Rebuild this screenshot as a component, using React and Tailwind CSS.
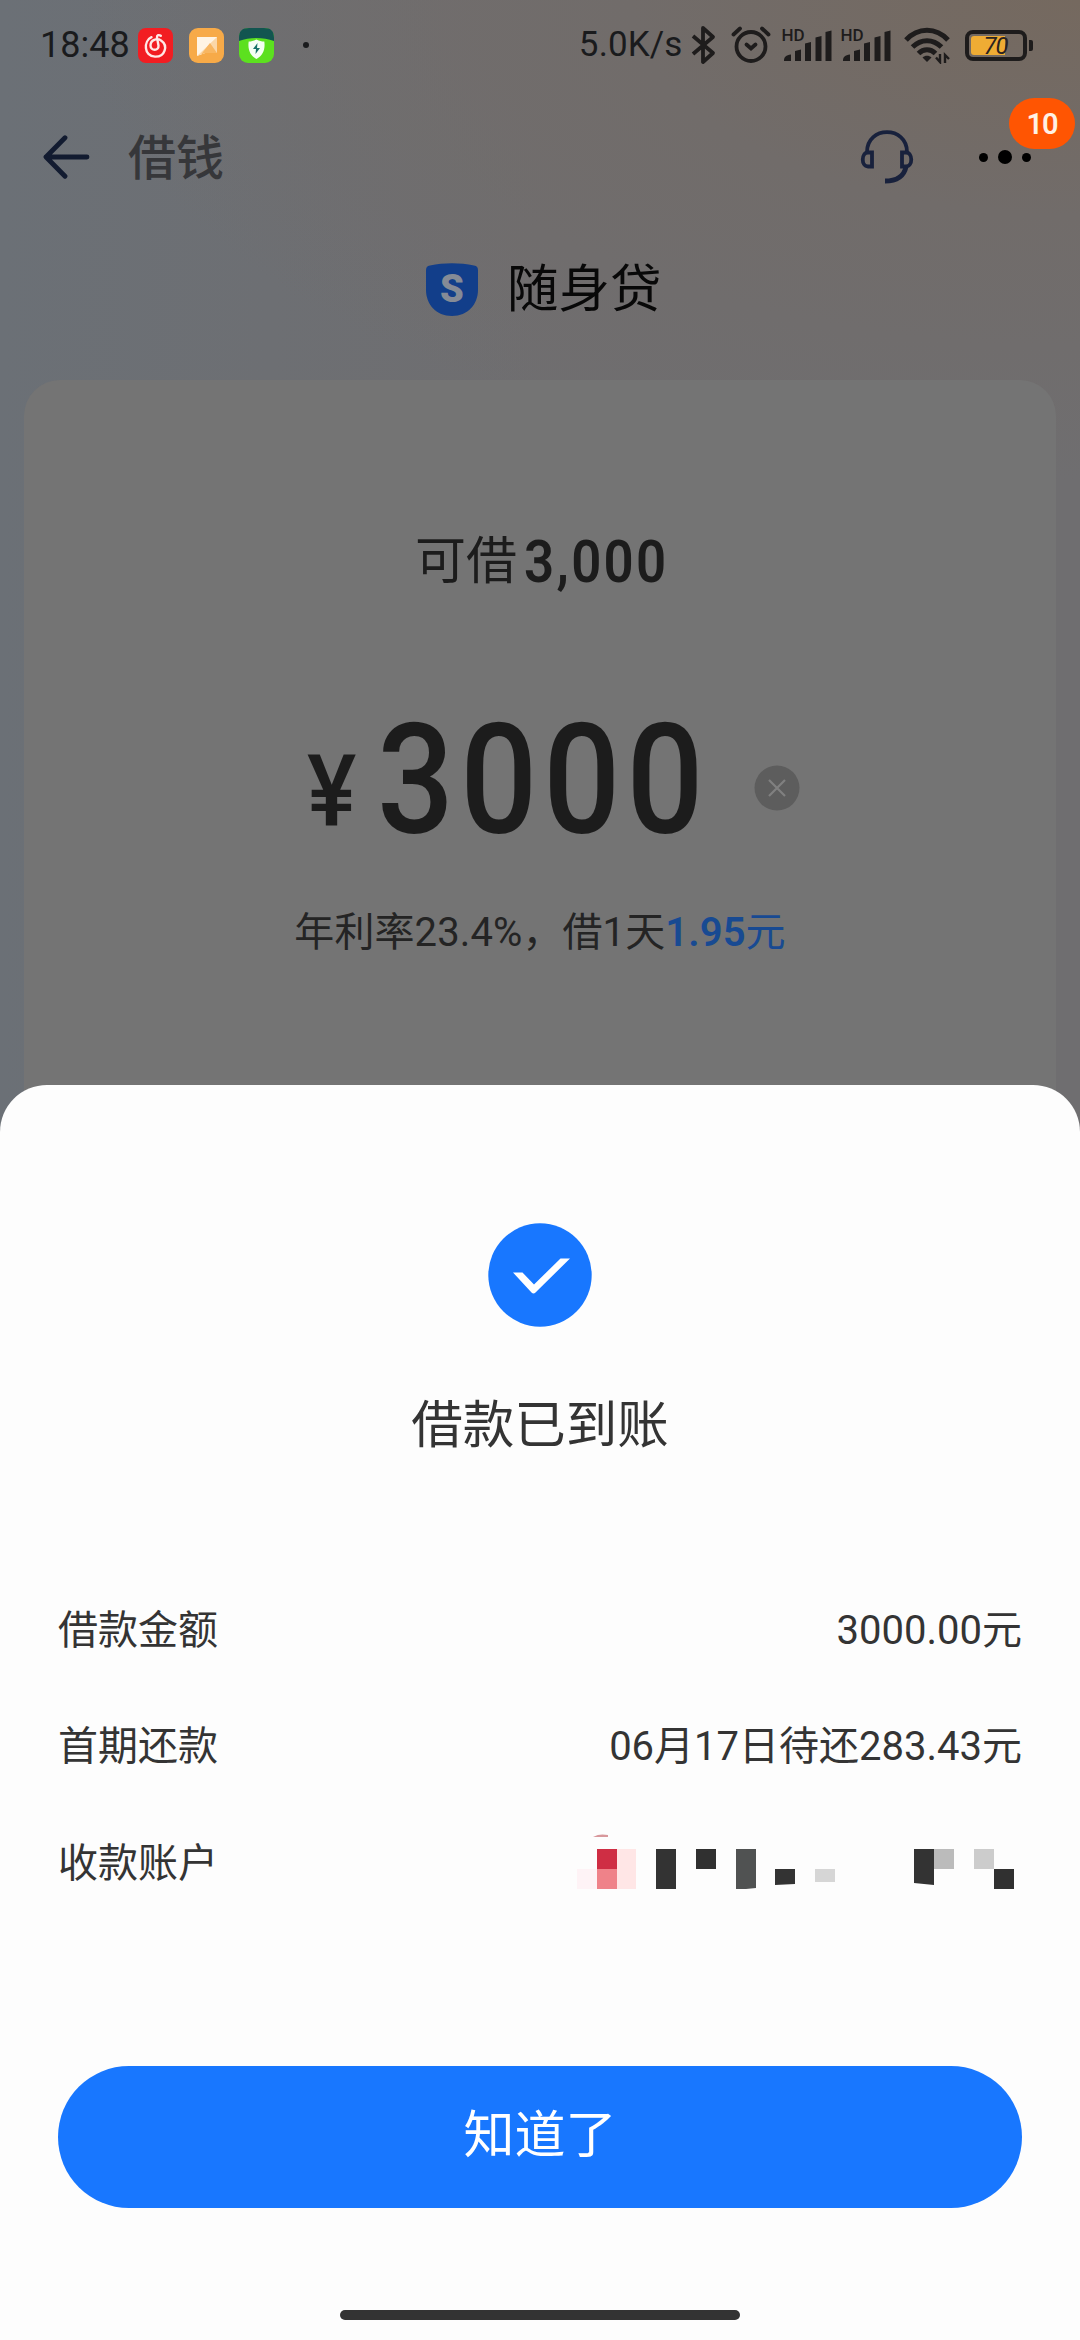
import React from "react";

const DETAILS = [
  { label: "借款金额", value: "3000.00元" },
  { label: "首期还款", value: "06月17日待还283.43元" },
  { label: "收款账户", masked: true },
];

// Blocks that hide the bank account: x, y, width, height, color
const MASK_BLOCKS = [
  [0, 35, 20, 20, "#fef3f6"],
  [20, 15, 20, 20, "#cf2e44"],
  [20, 35, 20, 20, "#ef8289"],
  [40, 15, 19, 40, "#ffe6e6"],
  [79, 15, 20, 40, "#333333"],
  [119, 15, 20, 20, "#303030"],
  [238, 35, 20, 13, "#d6d6d6"],
  [357, 15, 20, 20, "#bbbbbb"],
  [397, 15, 20, 20, "#cccccc"],
  [417, 35, 20, 20, "#303030"],
];

const MusicIcon = () => (
  <svg width="35" height="35" viewBox="0 0 35 35" fill="none">
    <rect width="35" height="35" rx="8" fill="#f21d22" />
    <g stroke="#ffe9e6" strokeWidth="2.4" strokeLinecap="round">
      <path d="M13.500 9.200C5.500 13 5.500 28 17 28.600c10 .4 13.500-11.200 6-16.200-4-2.700-10.500-.6-10.500 5 0 5.800 8.500 5.800 8 .2L19 9.500c-.2-2.500 2-3 3.800-1.700" />
    </g>
  </svg>
);

const NoteIcon = () => (
  <svg width="35" height="35" viewBox="0 0 35 35">
    <rect width="35" height="35" rx="9" fill="#f7aa48" />
    <path d="M8 9h20v16H16l-8 3z" fill="#fff4e4" />
    <path d="M28 9v16H16l-8 3z" fill="#fbd7a8" />
    <path d="M28 25H16l-4 1.500L21 15z" fill="#f8b661" />
  </svg>
);

const ShieldAppIcon = () => (
  <svg width="35" height="35" viewBox="0 0 35 35">
    <rect width="35" height="35" rx="9" fill="#5ce01f" />
    <path d="M0 10C0 3 3 0 10 0h15c7 0 10 3 10 10v3c-11-4-24-4-35 0z" fill="#125550" />
    <path d="M17.500 11.500c3 1.500 5 2 7.800 2 1.200 8-1.500 14.500-7.800 17.500-6.300-3-9-9.500-7.800-17.500 2.800 0 4.800-.5 7.800-2z" fill="#f4fff4" />
    <path d="M18.500 15l-4.500 6h3l-.5 5 4.500-6h-3z" fill="#167269" />
  </svg>
);

const BluetoothIcon = () => (
  <svg width="26" height="40" viewBox="0 0 26 40" fill="none" stroke="#1e1c1c" strokeWidth="3.800" strokeLinejoin="round">
    <path d="M2 11l20 17-10 9V3l10 9L2 29" />
  </svg>
);

const AlarmIcon = () => (
  <svg width="40" height="38" viewBox="0 0 40 38" fill="none" stroke="#1e1c1c" strokeWidth="3.800" strokeLinecap="round">
    <circle cx="20" cy="20.500" r="14.500" />
    <path d="M2.500 8.500l6.500-6M37.500 8.500l-6.500-6" />
    <path d="M15.500 18.500l4.500 4 4.500-4" />
  </svg>
);

const SignalIcon = () => (
  <div className="relative h-[33px] w-[50px]">
    <span className="absolute top-0 left-0 text-[17px] leading-[13px] font-medium text-[#1e1c1c]">
      HD
    </span>
    <svg className="absolute inset-0" width="50" height="33" viewBox="0 0 50 33" fill="#1e1c1c">
      <path d="M2 32c0-4 2-6 7-6.500V32zM13 22l6-1.500V32h-6zM23 14.500l6-1.500v19h-6zM33.500 8.500l6-1.500v25h-6zM43.500 3l6-1.500V32h-6z" />
    </svg>
  </div>
);

const WifiIcon = () => (
  <svg width="46" height="38" viewBox="0 0 46 38" fill="none" stroke="#1e1c1c" strokeWidth="5">
    <path d="M2 14C14 1 32 1 44 14" />
    <path d="M8.500 21c8.500-8.500 20.500-8.500 29 0" />
    <path d="M14.500 27.500c5-5 12-5 17 0" />
    <path d="M18.500 31.500c2.500-2.500 6.500-2.500 9 0L23 36z" fill="#1e1c1c" stroke="none" />
    <path d="M36 28v8l-4-4.500M41 37v-8l4 4" strokeWidth="2.400" />
  </svg>
);

const BatteryIcon = () => (
  <div className="flex items-center gap-[2px]">
    <div className="relative h-[31px] w-[62px] rounded-[8px] border-4 border-[#1e1c1c]">
      <div className="absolute top-[2px] bottom-[2px] left-[2px] w-[34px] rounded-l-[3px] bg-[#efac34]" />
      <span className="absolute inset-0 text-center text-[24px] leading-[25px] tracking-[-1px] text-[#2a2320] italic">
        70
      </span>
    </div>
    <div className="h-[11px] w-[4px] rounded-r-[2px] bg-[#1e1c1c]" />
  </div>
);

const StatusBar = () => (
  <div className="flex h-[90px] items-center text-[#1a1b1d]">
    <span className="ml-[40px] w-[98px] text-[36px]">18:48</span>
    <div className="flex items-center gap-[15.500px]">
      <MusicIcon />
      <NoteIcon />
      <ShieldAppIcon />
    </div>
    <div className="ml-[29px] h-[6px] w-[6px] rounded-full bg-[#1a1b1d]" />
    <span className="ml-auto text-[35px] tracking-[0.1px]">5.0K/s</span>
    <div className="ml-[8px] flex items-center">
      <BluetoothIcon />
      <div className="ml-[14px]"><AlarmIcon /></div>
      <div className="ml-[11px]"><SignalIcon /></div>
      <div className="ml-[9px]"><SignalIcon /></div>
      <div className="ml-[13px]"><WifiIcon /></div>
      <div className="mr-[47.500px] ml-[15px]"><BatteryIcon /></div>
    </div>
  </div>
);

const NavBar = () => (
  <div className="flex h-[134px] items-center">
    <svg className="ml-[43px]" width="47" height="44" viewBox="0 0 47 44" fill="none" stroke="#121b30" strokeWidth="4.800" strokeLinecap="round" strokeLinejoin="round">
      <path d="M44 22H3M22 2.800L3 22l19 19.200" />
    </svg>
    <h1 className="ml-[38px] pt-[4px] text-[48px] font-medium text-[#36373a]">借钱</h1>
    <svg className="ml-auto" width="54" height="56" viewBox="0 0 54 56" fill="none" stroke="#18213c" strokeWidth="3.800">
      <path d="M7 23C7-3.500 47-3.500 47 23" />
      <path d="M12 23.500H8c-7 0-7 14 0 14h4zM42 23.500h4c7 0 7 14 0 14h-4z" />
      <path d="M46 38c-2 9-9 14-21 14" strokeWidth="4.800" />
    </svg>
    <div className="relative mr-[49px] ml-[65px] flex h-[54px] w-[52px] items-center justify-between">
      <i className="h-[9px] w-[9px] rounded-full bg-black" />
      <i className="h-[14px] w-[14px] rounded-full bg-black" />
      <i className="h-[9px] w-[9px] rounded-full bg-black" />
      <span className="absolute top-[-32px] left-[30px] h-[51px] w-[66px] rounded-full bg-[#ff5502] text-center text-[29px] leading-[53px] font-semibold tracking-[-1px] text-[#fff1e4]">
        10
      </span>
    </div>
  </div>
);

const Brand = () => (
  <div className="flex h-[156px] items-center pb-[25px] pl-[425px]">
    <div className="relative h-[54px] w-[54px]">
      <svg width="54" height="54" viewBox="0 0 54 54">
        <path d="M5 2.500c14-3 30-3 44 0 3 .5 4 2 4 5V27c0 14-10 26-26 26S1 41 1 27V7.500c0-3 1-4.500 4-5z" fill="#123e8a" />
      </svg>
      <span className="absolute inset-0 text-center text-[38px] leading-[53px] font-black text-[#858b96]">
        S
      </span>
    </div>
    <span className="ml-[28px] text-[51.500px] text-[#080808]">随身贷</span>
  </div>
);

const AmountCard = () => (
  <div className="mx-[24px] flex h-[800px] flex-col items-center rounded-t-[36px] bg-[#747474] text-[#1c1c1c]">
    <div className="mt-[142px] flex h-[80px] w-full items-center pl-[391px]">
      <span className="text-[51px]">可借</span>
      <span className="ml-[7px] origin-left scale-x-[0.88] text-[60px] font-semibold tracking-[2.600px]">3,000</span>
    </div>
    <div className="mt-[77px] flex h-[200px] w-full items-center">
      <span className="ml-[283px] w-[70px] origin-left scale-x-[0.92] pt-[26px] text-[101px] font-medium">¥</span>
      <span className="w-[350px] origin-left scale-x-[0.88] pt-[3px] text-[154px] font-medium tracking-[7px]">3000</span>
      <svg className="mt-[17px] ml-[27px]" width="46" height="46" viewBox="0 0 46 46">
        <circle cx="23" cy="23" r="22.500" fill="#5d5d5d" />
        <path d="M15 15l16 16M31 15L15 31" stroke="#808080" strokeWidth="2.200" />
      </svg>
    </div>
    <p className="mt-[24px] text-[40px] leading-[60px] tracking-[0.1px] text-[#242424]">
      年利率23.4%，借1天<span className="text-[#184a92]"><b className="font-semibold">1.95</b>元</span>
    </p>
  </div>
);

const MaskedAccount = () => (
  <svg className="mr-[8px]" width="437" height="60" viewBox="0 0 437 60">
    {MASK_BLOCKS.map(([x, y, w, h, color]) => (
      <rect key={`${x}-${y}`} x={x} y={y} width={w} height={h} fill={color} />
    ))}
    <path d="M16 3c5-3 10-3 15-2v2z" fill="#d8989c" />
    <path d="M159 15h20v39l-10 1h-10z" fill="#505252" />
    <path d="M198 35h20v15l-20 1z" fill="#333" />
    <path d="M337 15h20v36l-20-2z" fill="#333" />
  </svg>
);

const ResultSheet = () => (
  <div className="absolute inset-x-0 bottom-0 flex h-[1255px] flex-col items-center rounded-t-[47px] bg-[#fdfdfd] px-[58px] text-[#343434]">
    <svg className="mt-[138px]" width="104" height="104" viewBox="0 0 104 104">
      <circle cx="52" cy="52" r="51.700" fill="#1877ff" />
      <path d="M25 49.500h9.500L46 61.500 72.500 35.500H82L47.500 69.500q-2 2-4 0z" fill="#fff" />
    </svg>
    <h2 className="mt-[59px] text-[51.500px] leading-[80px]">借款已到账</h2>
    <div className="mt-[106.500px] w-full text-[40px]">
      {DETAILS.map((item) => (
        <div key={item.label} className="flex h-[116.500px] w-full items-center justify-between">
          <span>{item.label}</span>
          {item.masked ? <MaskedAccount /> : <span>{item.value}</span>}
        </div>
      ))}
    </div>
    <button className="mt-[144px] h-[142px] w-full shrink-0 rounded-full bg-[#1877ff] text-[51px] leading-[136px] text-white">
      <span className="block -mt-[3px]">知道了</span>
    </button>
    <div className="mt-[102px] h-[10px] w-[400px] shrink-0 rounded-full bg-[#333]" />
  </div>
);

export default function App() {
  return (
    <div className="relative h-[2340px] w-[1080px] overflow-hidden bg-[#6e6f72] bg-[radial-gradient(1000px_480px_at_100%_0%,#75695f_0%,#716c6a_45%,transparent_100%),linear-gradient(90deg,#6b7076_0%,#6f6e70_50%,#6f6e70_100%)] font-[Roboto,'Noto_Sans_CJK_SC',sans-serif]">
      <StatusBar />
      <NavBar />
      <Brand />
      <AmountCard />
      <ResultSheet />
    </div>
  );
}
